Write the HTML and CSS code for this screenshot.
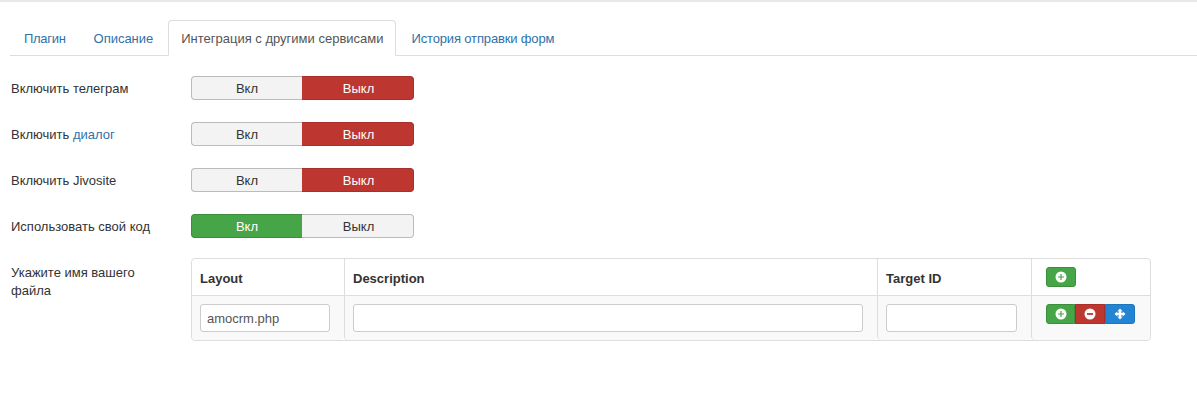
FILE: index.html
```html
<!DOCTYPE html>
<html lang="en">
<head>
    <meta charset="UTF-8">
    <title>Интеграция с другими сервисами</title>
    <link rel="stylesheet" href="styles.css">
</head>
<body>
    <ul class="tabs">
        <li><a href="#">Плагин</a></li>
        <li><a class="tight" href="#">Описание</a></li>
        <li class="active"><a href="#">Интеграция с другими сервисами</a></li>
        <li><a href="#">История отправки форм</a></li>
    </ul>

    <div class="field">
        <label class="field-label">Включить телеграм</label>
        <div class="switch">
            <span class="switch-btn">Вкл</span>
            <span class="switch-btn off">Выкл</span>
        </div>
    </div>
    <div class="field">
        <label class="field-label">Включить <a href="#">диалог</a></label>
        <div class="switch">
            <span class="switch-btn">Вкл</span>
            <span class="switch-btn off">Выкл</span>
        </div>
    </div>
    <div class="field">
        <label class="field-label">Включить Jivosite</label>
        <div class="switch">
            <span class="switch-btn">Вкл</span>
            <span class="switch-btn off">Выкл</span>
        </div>
    </div>
    <div class="field">
        <label class="field-label">Использовать свой код</label>
        <div class="switch">
            <span class="switch-btn on">Вкл</span>
            <span class="switch-btn">Выкл</span>
        </div>
    </div>

    <div class="field field-table">
        <label class="field-label">Укажите имя вашего файла</label>
        <div class="grid">
            <div class="cell head">Layout</div>
            <div class="cell head">Description</div>
            <div class="cell head">Target ID</div>
            <div class="cell head last">
                <div class="actions">
                    <span class="act green"><svg viewBox="0 0 12 12"><circle cx="6" cy="6" r="5.5" fill="#fff"/><path d="M3 6h6M6 3v6" stroke="#46a546" stroke-width="1.2"/></svg></span>
                </div>
            </div>
            <div class="cell body"><input class="text" type="text" value="amocrm.php"></div>
            <div class="cell body"><input class="text" type="text"></div>
            <div class="cell body"><input class="text" type="text"></div>
            <div class="cell body last">
                <div class="actions">
                    <span class="act green"><svg viewBox="0 0 12 12"><circle cx="6" cy="6" r="5.5" fill="#fff"/><path d="M3 6h6M6 3v6" stroke="#46a546" stroke-width="1.2"/></svg></span>
                    <span class="act red"><svg viewBox="0 0 12 12"><circle cx="6" cy="6" r="5.5" fill="#fff"/><path d="M3 6h6" stroke="#bd362f" stroke-width="1.8"/></svg></span>
                    <span class="act blue"><svg viewBox="0 0 12 12"><path d="M6 .5L8.600 3.200H7.200V4.800H8.800V3.400L11.500 6 8.800 8.600V7.200H7.200V8.800H8.600L6 11.500 3.400 8.800H4.800V7.200H3.200V8.600L.5 6 3.200 3.400V4.800H4.800V3.200H3.400z" fill="#fff"/></svg></span>
                </div>
            </div>
        </div>
    </div>
</body>
</html>
```

FILE: styles.css
```css
body { margin: 0; padding: 20px 0 0 10px; border-top: 2px solid #e8e8e8; font-family: "Liberation Sans", Arial, sans-serif; font-size: 13px; line-height: 18px; color: #333; background: #fff; }
a { color: #3071a9; text-decoration: none; }

.tabs { display: flex; gap: 2px; margin: -2px 0 20px; padding: 0; list-style: none; border-bottom: 1px solid #ddd; height: 35px; }
.tabs li { margin-bottom: -1px; }
.tabs a { display: block; padding: 9px 12px 7px; height: 18px; border: 1px solid transparent; border-radius: 4px 4px 0 0; letter-spacing: -0.15px; }
.tabs a.tight { letter-spacing: -0.02px; padding-left: 12px; }
.tabs li:first-child a { padding-left: 13px; letter-spacing: -0.3px; }
.tabs .active a { color: #555; background: #fff; border-color: #ddd #ddd transparent; letter-spacing: 0; }

.field { display: flex; align-items: center; margin-bottom: 22px; }
.field-label { box-sizing: border-box; width: 181px; flex: none; padding: 1px 0 0 1px; }
.switch { display: flex; width: 223px; height: 24px; }
.switch-btn { box-sizing: border-box; width: 112px; padding-top: 1px; display: flex; align-items: center; justify-content: center; background: #f3f3f3; border: 1px solid #bbb; color: #333; }
.switch-btn:first-child { width: 111px; border-right: 0; border-radius: 4px 0 0 4px; }
.switch-btn:last-child { padding-left: 2px; border-left: 0; border-radius: 0 4px 4px 0; }
.switch-btn.off { background: #bd362f; border-color: #a9302a; color: #fff; }
.switch-btn.on { background: #46a546; border-color: #3c8d3c; color: #fff; }

.field-table { align-items: flex-start; margin-top: -2px; }
.field-table .field-label { padding: 6px 30px 0 1px; }

.grid { display: grid; grid-template-columns: 152px 533px 154px 119px; width: 958px; border: 1px solid #ddd; border-radius: 4px; }
.cell { box-sizing: border-box; padding: 8px; border-left: 1px solid #ddd; }
.cell:nth-child(4n+1) { border-left: 0; }
.head { height: 37px; padding-top: 10px; border-bottom: 1px solid #ddd; font-weight: bold; line-height: 20px; }
.body { height: 44px; background: #f9f9f9; border-radius: 0 0 4px 4px; }
.last { padding: 8px 0 0 14px; }

.text { box-sizing: border-box; display: block; width: 130px; height: 28px; padding: 4px 6px; border: 1px solid #ccc; border-radius: 3px; font: 13px "Liberation Sans", Arial, sans-serif; color: #555; background: #fff; }
.body:nth-child(6) .text { width: 510px; }
.body:nth-child(7) .text { width: 131px; }

.actions { display: flex; }
.act { box-sizing: border-box; width: 30px; height: 20px; display: flex; align-items: center; justify-content: center; border: 1px solid; }
.act svg { width: 12px; height: 12px; }
.act:first-child { width: 29px; border-radius: 3px 0 0 3px; }
.act:last-child { border-radius: 0 3px 3px 0; }
.act:only-child { width: 30px; border-radius: 3px; }
.green { background: #46a546; border-color: #3c8d3c; }
.red { background: #bd362f; border-color: #a9302a; }
.blue { background: #2384d3; border-color: #1f75bb; }
```
